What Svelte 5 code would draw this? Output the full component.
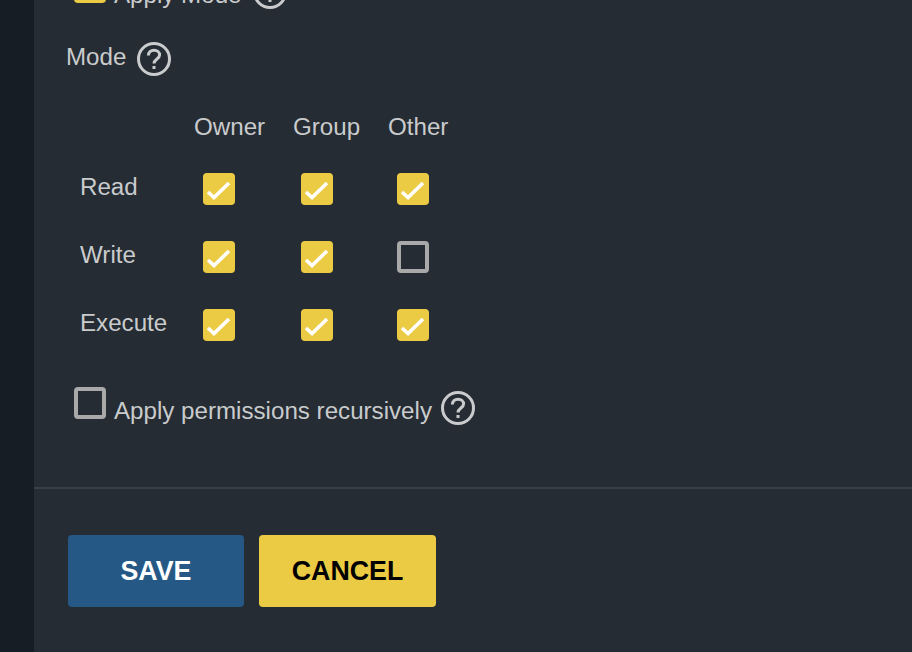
<script>
  const rows = [
    { name: 'Read', values: [true, true, true] },
    { name: 'Write', values: [true, true, false] },
    { name: 'Execute', values: [true, true, true] }
  ];
</script>

{#snippet help()}
  <svg class="help" viewBox="0 0 34 34" aria-hidden="true">
    <circle cx="17" cy="17" r="15.5" />
    <path d="M11.4 13.6c0-3.2 2.4-5.4 5.7-5.4 3.2 0 5.5 2 5.5 4.8 0 4-5.6 4-5.6 8.6" />
    <rect x="15.5" y="24" width="3" height="3" />
  </svg>
{/snippet}

{#snippet box(checked)}
  <span class="box" class:checked>
    {#if checked}
      <svg viewBox="0 0 32 32" aria-hidden="true"><path d="M5 19 L11 24.5 L26 10" /></svg>
    {/if}
  </span>
{/snippet}

<div class="page">
  <aside class="rail"></aside>
  <main class="main">
    <section class="form">
      <div class="check-row top">
        {@render box(true)}
        <span class="check-label">Apply Mode</span>
        {@render help()}
      </div>

      <div class="mode-row">
        <span>Mode</span>
        {@render help()}
      </div>

      <div class="grid">
        <div class="head-row">
          <span></span><span>Owner</span><span>Group</span><span>Other</span>
        </div>
        {#each rows as row}
          <div class="perm-row">
            <span class="perm-name">{row.name}</span>
            {#each row.values as value}
              <span class="cell">{@render box(value)}</span>
            {/each}
          </div>
        {/each}
      </div>

      <div class="check-row recursive">
        {@render box(false)}
        <span class="check-label">Apply permissions recursively</span>
        {@render help()}
      </div>
    </section>

    <footer class="actions">
      <button class="save">SAVE</button>
      <button class="cancel">CANCEL</button>
    </footer>
  </main>
</div>

<style>
  :global(body) {
    margin: 0;
    background: #252c33;
  }
  .page {
    display: flex;
    width: 912px;
    height: 652px;
    overflow: hidden;
    font-family: "Liberation Sans", Arial, sans-serif;
    font-size: 24.15px;
    line-height: 32px;
    color: #c9cbcd;
  }
  .rail {
    flex: 0 0 34px;
    background: #161d24;
  }
  .main {
    flex: 1;
    display: flex;
    flex-direction: column;
    background: #252c33;
  }
  .form {
    height: 518px;
    margin-top: -29px;
    padding-left: 32px;
    box-sizing: border-box;
    border-bottom: 2px solid #383f47;
    flex: none;
  }
  .check-row {
    display: flex;
    align-items: flex-start;
    margin-left: 8px;
  }
  .check-label {
    margin-left: 8px;
    margin-top: 8px;
  }
  .check-row .help {
    margin-left: 9px;
    margin-top: 4px;
  }
  .top .help {
    margin-left: 12px;
  }
  .recursive {
    margin-top: 46px;
  }
  .help {
    display: block;
    flex: none;
    width: 34px;
    height: 34px;
    fill: none;
    stroke: #c9cbcd;
    stroke-width: 3;
  }
  .help rect {
    fill: #c9cbcd;
    stroke: none;
  }
  .mode-row {
    display: flex;
    align-items: center;
    height: 34px;
    margin-top: 31px;
  }
  .mode-row span {
    margin-top: -5px;
  }
  .mode-row .help {
    margin-left: 11px;
  }
  .grid {
    margin-top: 35px;
    margin-left: 14px;
  }
  .head-row,
  .perm-row {
    display: grid;
    grid-template-columns: 114px 99px 95px 60px;
  }
  .head-row {
    height: 32px;
  }
  .perm-row {
    height: 32px;
    margin-top: 36px;
    align-items: center;
  }
  .head-row + .perm-row {
    margin-top: 30px;
  }
  .perm-name {
    margin-top: -4px;
  }
  .cell {
    display: block;
    padding-left: 9px;
    height: 32px;
  }
  .cell:nth-child(3) {
    padding-left: 8px;
  }
  .box {
    display: block;
    flex: none;
    width: 32px;
    height: 32px;
    box-sizing: border-box;
    border: 4px solid #a9a9aa;
    border-radius: 4px;
  }
  .box.checked {
    background: #eccb44;
    border: 0;
  }
  .box svg {
    display: block;
    width: 32px;
    height: 32px;
    fill: none;
    stroke: #fff;
    stroke-width: 3.6;
  }
  .actions {
    display: flex;
    gap: 15px;
    padding: 46px 0 0 34px;
  }
  button {
    height: 72px;
    border: 0;
    border-radius: 4px;
    padding: 0;
    font-family: inherit;
    font-size: 26.8px;
    font-weight: 700;
  }
  .save {
    width: 176px;
    background: #255885;
    color: #fff;
  }
  .cancel {
    width: 177px;
    background: #eccb44;
    color: #000;
  }
</style>
